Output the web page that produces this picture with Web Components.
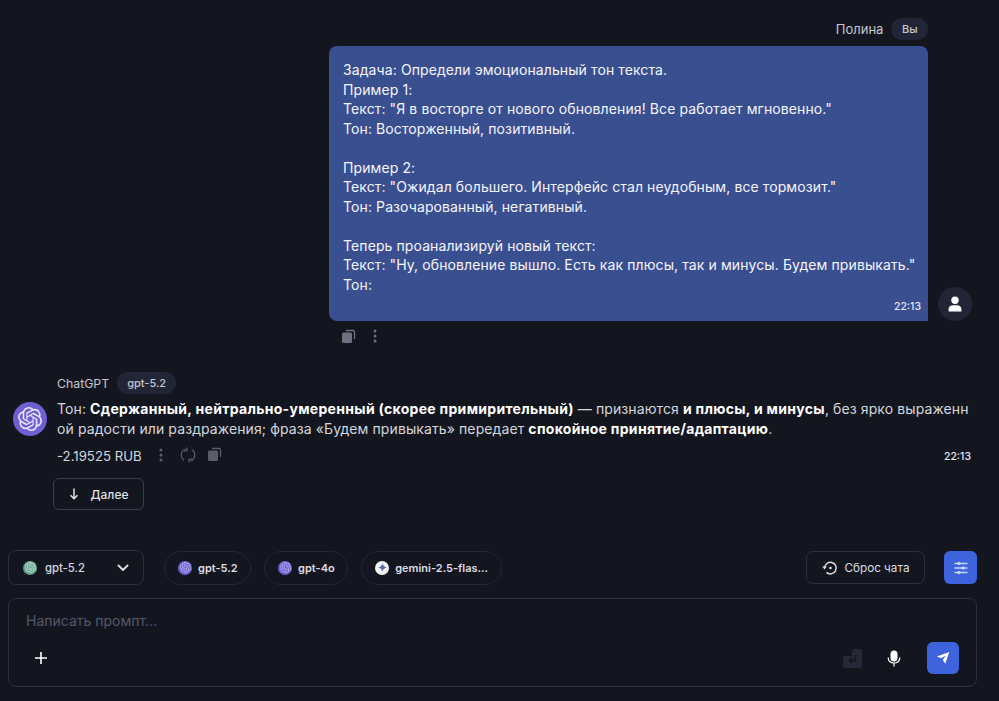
<!DOCTYPE html>
<html lang="ru">
<head>
<meta charset="utf-8">
<title>Chat</title>
<style>
  html, body { margin: 0; height: 100%; background: #14161f; }
  body { font-family: Inter, "Noto Sans", sans-serif; color: #e6e7ec; overflow: hidden; }
  chat-app { height: 701px; }
</style>
</head>
<body>
<chat-app>
  <user-message name="Полина" badge="Вы" time="22:13">Задача: Определи эмоциональный тон текста.
Пример 1:
Текст: "Я в восторге от нового обновления! Все работает мгновенно."
Тон: Восторженный, позитивный.

Пример 2:
Текст: "Ожидал большего. Интерфейс стал неудобным, все тормозит."
Тон: Разочарованный, негативный.

Теперь проанализируй новый текст:
Текст: "Ну, обновление вышло. Есть как плюсы, так и минусы. Будем привыкать."
Тон:</user-message>
  <bot-message name="ChatGPT" badge="gpt-5.2" time="22:13" cost="-2.19525 RUB">Тон: <b>Сдержанный, нейтрально-умеренный (скорее примирительный)</b> — признаются <b>и плюсы, и минусы</b>, без ярко выраженн<br>ой радости или раздражения; фраза «Будем привыкать» передает <b>спокойное принятие/адаптацию</b>.</bot-message>
  <composer-bar></composer-bar>
</chat-app>

<script>
const OPENAI = 'M22.2819 9.8211a5.9847 5.9847 0 0 0-.5157-4.9108 6.0462 6.0462 0 0 0-6.5098-2.9A6.0651 6.0651 0 0 0 4.9807 4.1818a5.9847 5.9847 0 0 0-3.9977 2.9 6.0462 6.0462 0 0 0 .7427 7.0966 5.98 5.98 0 0 0 .511 4.9107 6.051 6.051 0 0 0 6.5146 2.9001A5.9847 5.9847 0 0 0 13.2599 24a6.0557 6.0557 0 0 0 5.7718-4.2058 5.9894 5.9894 0 0 0 3.9977-2.9001 6.0557 6.0557 0 0 0-.7475-7.0729zm-9.022 12.6081a4.4755 4.4755 0 0 1-2.8764-1.0408l.1419-.0804 4.7783-2.7582a.7948.7948 0 0 0 .3927-.6813v-6.7369l2.02 1.1686a.071.071 0 0 1 .038.052v5.5826a4.504 4.504 0 0 1-4.4945 4.4944zm-9.6607-4.1254a4.4708 4.4708 0 0 1-.5346-3.0137l.142.0852 4.783 2.7582a.7712.7712 0 0 0 .7806 0l5.8428-3.3685v2.3324a.0804.0804 0 0 1-.0332.0615L9.74 19.9502a4.4992 4.4992 0 0 1-6.1408-1.6464zM2.3408 7.8956a4.485 4.485 0 0 1 2.3655-1.9728V11.6a.7664.7664 0 0 0 .3879.6765l5.8144 3.3543-2.0201 1.1685a.0757.0757 0 0 1-.071 0l-4.8303-2.7865A4.504 4.504 0 0 1 2.3408 7.872zm16.5963 3.8558L13.1038 8.364 15.1192 7.2a.0757.0757 0 0 1 .071 0l4.8303 2.7913a4.4944 4.4944 0 0 1-.6765 8.1042v-5.6772a.79.79 0 0 0-.407-.667zm2.0107-3.0231l-.142-.0852-4.7735-2.7818a.7759.7759 0 0 0-.7854 0L9.409 9.2297V6.8974a.0662.0662 0 0 1 .0284-.0615l4.8303-2.7866a4.4992 4.4992 0 0 1 6.6802 4.66zM8.3065 12.863l-2.02-1.1638a.0804.0804 0 0 1-.038-.0567V6.0742a4.4992 4.4992 0 0 1 7.3757-3.4537l-.142.0805L8.704 5.459a.7948.7948 0 0 0-.3927.6813zm1.0976-2.3654l2.602-1.4998 2.6069 1.4998v2.9994l-2.5974 1.4997-2.6067-1.4997Z';

const icons = {
  copy: `<svg width="15" height="15" viewBox="0 0 15 15"><path d="M5 1.5h7a1.5 1.5 0 0 1 1.5 1.5v7" fill="none" stroke="currentColor" stroke-width="1.3"/><rect x="1" y="3.5" width="10" height="10.5" rx="1.5" fill="currentColor"/></svg>`,
  dots: `<svg width="4" height="14" viewBox="0 0 4 14" fill="currentColor"><circle cx="2" cy="2" r="1.5"/><circle cx="2" cy="7" r="1.5"/><circle cx="2" cy="12" r="1.5"/></svg>`,
  refresh: `<svg width="16" height="16" viewBox="0 0 16 16" fill="none" stroke="currentColor" stroke-width="1.2"><path d="M4 13.2A6.4 6.4 0 0 1 5.4 2"/><path d="M6.6.5 7.2 3.6 4 4.2"/><path d="M12 2.8A6.4 6.4 0 0 1 10.6 14"/><path d="M9.4 15.5 8.8 12.4 12 11.8"/></svg>`,
  arrowDown: `<svg width="10" height="12" viewBox="0 0 10 12" fill="none" stroke="currentColor" stroke-width="1.5"><path d="M5 .5v10M1.5 7.2 5 10.7l3.5-3.5"/></svg>`,
  chevron: `<svg width="12" height="8" viewBox="0 0 12 8" fill="none" stroke="currentColor" stroke-width="2" stroke-linecap="round" stroke-linejoin="round"><path d="M1.5 1.5 6 6l4.5-4.5"/></svg>`,
  history: `<svg width="16" height="16" viewBox="0 0 16 16" fill="none" stroke="currentColor" stroke-width="1.5"><path d="M2.6 8a5.8 5.8 0 1 1 1.9 4.4"/><path d="M.2 6.6h4.6L2.5 9.4z" fill="currentColor" stroke="none"/><circle cx="8.5" cy="8" r="1.3" fill="currentColor" stroke="none"/></svg>`,
  sliders: `<svg width="14" height="14" viewBox="0 0 14 14" fill="none" stroke="currentColor" stroke-width="1.3"><path d="M.5 2.5h13M.5 7h13M.5 11.5h13"/><circle cx="5" cy="2.5" r="1.7" fill="currentColor" stroke="none"/><circle cx="9" cy="7" r="1.7" fill="currentColor" stroke="none"/><circle cx="5" cy="11.5" r="1.7" fill="currentColor" stroke="none"/></svg>`,
  send: `<svg width="14" height="14" viewBox="0 0 16 16" fill="currentColor"><path d="M15.2 1.2 10.6 14.6 7.7 10.2 11.2 5.4 5.9 8.4 1 6.2z"/></svg>`,
  mic: `<svg width="14" height="17" viewBox="0 0 14 17"><rect x="3.5" y="0.5" width="7" height="11" rx="3.5" fill="currentColor"/><path d="M1.2 7.6c0 3.4 2.5 5.4 5.8 5.4s5.8-2 5.8-5.4M7 13v3.5" fill="none" stroke="currentColor" stroke-width="1.2"/></svg>`,
  enter: `<svg width="19" height="19" viewBox="0 0 19 19"><path d="M11 0h6a2 2 0 0 1 2 2v15a2 2 0 0 1-2 2H2a2 2 0 0 1-2-2V9a2 2 0 0 1 2-2h7V2a2 2 0 0 1 2-2z" fill="#252836"/><path d="M12.5 6v5.5H6.5M9 9l-2.6 2.5L9 14" fill="none" stroke="#14161f" stroke-width="1.6"/></svg>`,
  user: `<svg width="16" height="16" viewBox="0 0 16 16" fill="currentColor"><circle cx="8" cy="4.2" r="3.7"/><path d="M1.6 15.6v-2.4c0-2.6 2-4 4.4-4h4c2.4 0 4.4 1.4 4.4 4v2.4z"/></svg>`,
  plus: `<svg width="12" height="12" viewBox="0 0 12 12" fill="none" stroke="currentColor" stroke-width="1.6"><path d="M6 0v12M0 6h12"/></svg>`
};
const logo = (size, fill) => `<svg width="${size}" height="${size}" viewBox="0 0 24 24" fill="${fill}"><path d="${OPENAI}"/></svg>`;

class ChatApp extends HTMLElement {
  constructor() {
    super();
    this.attachShadow({ mode: 'open' }).innerHTML = `
      <style>
        :host { display: flex; flex-direction: column; box-sizing: border-box; padding-top: 18px; }
      </style>
      <slot></slot>`;
  }
}

class UserMessage extends HTMLElement {
  constructor() {
    super();
    this.attachShadow({ mode: 'open' }).innerHTML = `
      <style>
        :host { display: block; padding-right: 27px; }
        .head { display: flex; justify-content: flex-end; align-items: center; gap: 8px; height: 22px; margin-right: 44px; font-size: 13px; color: #c4c6cf; }
        .badge { background: #222536; border-radius: 11px; padding: 0 10.5px; line-height: 22px; font-size: 11px; font-weight: 500; }
        .row { display: flex; justify-content: flex-end; align-items: flex-end; gap: 10px; margin-top: 6px; }
        .bubble { box-sizing: border-box; width: 599px; height: 275px; background: #3a4f90; border-radius: 8px 8px 0 8px; padding: 14px 12px 0 14px; position: relative; font-size: 14px; line-height: 19.5px; color: #f4f5fa; white-space: pre-wrap; letter-spacing: 0.1px; }
        .time { position: absolute; right: 7px; bottom: 8px; font-size: 10.5px; font-weight: 500; line-height: 12px; color: #e4e8f6; letter-spacing: 0; }
        .avatar { width: 34px; height: 34px; border-radius: 50%; background: #222536; display: flex; align-items: center; justify-content: center; color: #fff; }
        .actions { display: flex; align-items: center; gap: 17px; margin: 7px 0 0 341px; height: 16px; color: #6e7080; }
      </style>
      <div class="head"><span>${this.getAttribute('name')}</span><span class="badge">${this.getAttribute('badge')}</span></div>
      <div class="row">
        <div class="bubble"><slot></slot><span class="time">${this.getAttribute('time')}</span></div>
        <div class="avatar">${icons.user}</div>
      </div>
      <div class="actions">${icons.copy}${icons.dots}</div>`;
  }
}

class BotMessage extends HTMLElement {
  constructor() {
    super();
    this.attachShadow({ mode: 'open' }).innerHTML = `
      <style>
        :host { display: grid; grid-template-columns: 34px 1fr; column-gap: 10px; padding: 0 28px 0 13px; margin-top: 28px; }
        .head { grid-column: 2; display: flex; align-items: center; gap: 8px; height: 22px; font-size: 12.3px; color: #c4c6cf; }
        .badge { background: #222536; border-radius: 11px; padding: 0 10px; line-height: 22px; font-size: 11px; font-weight: 500; }
        .logo { width: 34px; height: 34px; border-radius: 50%; background: #6f5fd2; display: flex; align-items: center; justify-content: center; margin-top: 8px; }
        .text { font-size: 14px; line-height: 20px; color: #d4d6de; margin-top: 5px; letter-spacing: 0.1px; white-space: nowrap; }
        ::slotted(b) { color: #fff; font-weight: 700; letter-spacing: 0.3px; }
        .meta { grid-column: 2; display: flex; align-items: center; margin-top: 8px; height: 17px; font-size: 13.2px; color: #d4d6de; position: relative; }
        .meta .ic { color: #5b5d6c; display: flex; align-items: center; position: relative; top: -1px; }
        .time { position: absolute; right: 0; top: 4px; font-size: 10.5px; font-weight: 500; line-height: 12px; color: #e4e8f6; }
        .next { grid-column: 2; justify-self: start; margin: 14px 0 0 -4px; box-sizing: border-box; width: 91px; height: 32px; border: 1px solid #3a3d4e; border-radius: 6px; display: flex; align-items: center; justify-content: center; gap: 12px; font-size: 12px; font-weight: 500; color: #dfe0e6; }
      </style>
      <div class="head"><span>${this.getAttribute('name')}</span><span class="badge">${this.getAttribute('badge')}</span></div>
      <div class="logo">${logo(24, '#e9e6fa')}</div>
      <div class="text"><slot></slot></div>
      <div class="meta"><span>${this.getAttribute('cost')}</span>
        <span class="ic" style="margin-left:17px">${icons.dots}</span>
        <span class="ic" style="margin-left:17px">${icons.refresh}</span>
        <span class="ic" style="margin-left:11px">${icons.copy}</span>
        <span class="time">${this.getAttribute('time')}</span></div>
      <div class="next">${icons.arrowDown}<span>Далее</span></div>`;
  }
}

class ComposerBar extends HTMLElement {
  constructor() {
    super();
    const dot = (bg, inner) => `<span class="dot" style="background:${bg}">${inner}</span>`;
    const violet = dot('#6f5fd2', logo(11, '#b9b0ee'));
    const gem = dot('#f2f3f7', `<svg width="9" height="9" viewBox="0 0 10 10" fill="#5c6f9e"><path d="M5 0c.4 2.8 2.2 4.6 5 5-2.8.4-4.6 2.2-5 5-.4-2.8-2.2-4.6-5-5 2.8-.4 4.6-2.2 5-5z"/></svg>`);
    this.attachShadow({ mode: 'open' }).innerHTML = `
      <style>
        :host { display: block; margin-top: auto; padding: 0 22px 14px 8px; }
        .models { display: flex; align-items: center; height: 35px; }
        .select { box-sizing: border-box; width: 136px; height: 35px; border: 1px solid #2c2f3e; border-radius: 8px; display: flex; align-items: center; padding: 0 14px 0 14px; font-size: 11.3px; font-weight: 500; color: #d8d9e0; }
        .select span.l { margin-left: 8px; flex: 1; }
        .chip { box-sizing: border-box; height: 34px; margin-left: 13px; border: 1px solid #232633; border-radius: 17px; display: flex; align-items: center; gap: 6px; padding: 0 12.5px 0 13px; font-size: 11px; font-weight: 600; color: #dcdde3; white-space: nowrap; }
        .chip.first { margin-left: 20px; }
        .dot { width: 14px; height: 14px; border-radius: 50%; display: flex; align-items: center; justify-content: center; flex: none; }
        .reset { box-sizing: border-box; margin-left: auto; width: 119px; height: 33px; border: 1px solid #2c2f3e; border-radius: 7px; display: flex; align-items: center; justify-content: center; gap: 7px; font-size: 11.7px; color: #dcdde3; }
        .blue { box-sizing: border-box; width: 33px; height: 33px; border-radius: 6px; background: #3d63dd; color: #c9d6ff; display: flex; align-items: center; justify-content: center; }
        .settings { margin-left: 19px; }
        .input { box-sizing: border-box; height: 89px; margin-top: 13px; border: 1px solid #2c2f3e; border-radius: 8px; padding: 12px 17px 12px 17px; display: flex; flex-direction: column; justify-content: space-between; }
        .ph { font-size: 14px; line-height: 20px; color: #53566a; }
        .tools { display: flex; align-items: center; color: #fff; height: 32px; }
        .tools .plus { margin-left: 9px; display: flex; }
        .tools .enter { margin-left: auto; display: flex; }
        .tools .mic { margin-left: 25px; display: flex; }
        .tools .blue { margin-left: 26px; color: #fff; width: 32px; height: 32px; }
      </style>
      <div class="models">
        <div class="select">${dot('#5f9e8c', logo(11, '#cfe5dc'))}<span class="l">gpt-5.2</span>${icons.chevron}</div>
        <div class="chip first">${violet}<span>gpt-5.2</span></div>
        <div class="chip">${violet}<span>gpt-4o</span></div>
        <div class="chip">${gem}<span>gemini-2.5-flas...</span></div>
        <div class="reset">${icons.history}<span>Сброс чата</span></div>
        <div class="blue settings">${icons.sliders}</div>
      </div>
      <div class="input">
        <div class="ph">Написать промпт...</div>
        <div class="tools">
          <span class="plus">${icons.plus}</span>
          <span class="enter">${icons.enter}</span>
          <span class="mic">${icons.mic}</span>
          <span class="blue">${icons.send}</span>
        </div>
      </div>`;
  }
}

customElements.define('chat-app', ChatApp);
customElements.define('user-message', UserMessage);
customElements.define('bot-message', BotMessage);
customElements.define('composer-bar', ComposerBar);
</script>
</body>
</html>
